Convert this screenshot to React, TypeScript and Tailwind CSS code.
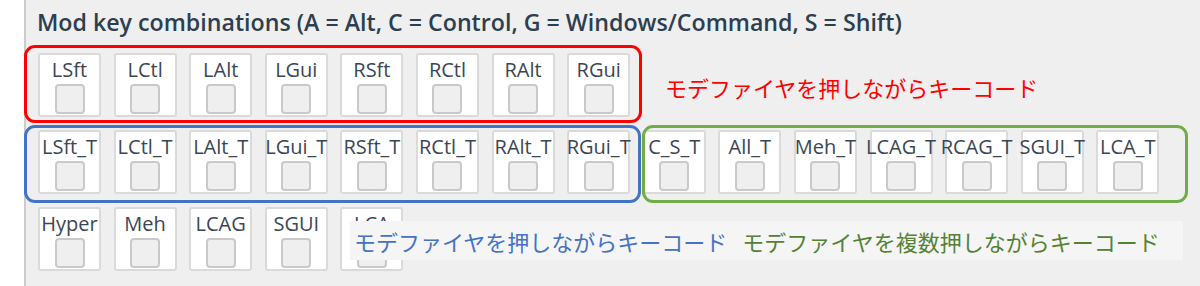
const rowOne = ["LSft", "LCtl", "LAlt", "LGui", "RSft", "RCtl", "RAlt", "RGui"];
const rowTwo = [
  "LSft_T", "LCtl_T", "LAlt_T", "LGui_T", "RSft_T", "RCtl_T", "RAlt_T", "RGui_T",
  "C_S_T", "All_T", "Meh_T", "LCAG_T", "RCAG_T", "SGUI_T", "LCA_T"
];
const rowThree = ["Hyper", "Meh", "LCAG", "SGUI", "LCA"];

function ModKey({ label }: { label: string }) {
  return (
    <div className="w-[63px] h-[64px] shrink-0 bg-white border-2 border-[#dadada] rounded-[3px] flex flex-col items-center">
      <span className="flex justify-center w-full whitespace-nowrap text-[20px] leading-[26px] mt-[2px] text-[#3b4654] overflow-visible">
        {label}
      </span>
      <span className="mt-[1px] w-[30px] h-[30px] rounded-[4px] border-2 border-[#c9c9c9] bg-[#efefef]" />
    </div>
  );
}

function KeyRow({ keys }: { keys: string[] }) {
  return (
    <div className="flex gap-x-[12.6px]">
      {keys.map((k) => (
        <ModKey key={k} label={k} />
      ))}
    </div>
  );
}

export default function App() {
  return (
    <div
      className="relative w-[1200px] h-[286px] flex bg-white overflow-hidden"
      style={{ fontFamily: '"Open Sans", "Noto Sans CJK JP", sans-serif' }}
    >
      <div className="w-[24px] shrink-0 bg-white" />
      <main className="flex-1 border-l-2 border-[#cccccc] bg-[#efefef] pl-[11px] pt-[6px]">
        <h2 className="text-[23.2px] leading-[32px] font-semibold text-[#2c3e50] whitespace-nowrap">
          Mod key combinations (A = Alt, C = Control, G = Windows/Command, S = Shift)
        </h2>
        <div className="mt-[15px] flex flex-col gap-y-[13px] pl-[1px]">
          <KeyRow keys={rowOne} />
          <KeyRow keys={rowTwo} />
          <KeyRow keys={rowThree} />
        </div>
      </main>

      {/* annotation overlays */}
      <div className="absolute left-[24px] top-[45px] w-[618px] h-[78px] border-[3px] border-[#ff0000] rounded-[11px]" />
      <div className="absolute left-[24px] top-[125px] w-[617px] h-[78px] border-[3px] border-[#4472c4] rounded-[11px]" />
      <div className="absolute left-[642px] top-[125px] w-[546px] h-[78px] border-[3px] border-[#70ad47] rounded-[11px]" />
      <div
        className="absolute left-[665px] top-[72px] text-[22px] leading-[30px] text-[#ff0000]"
        style={{ fontFamily: '"Noto Sans CJK JP", sans-serif' }}
      >
        モデファイヤを押しながらキーコード
      </div>
      <div
        className="absolute left-[350px] top-[221px] w-[833px] h-[39px] bg-[#f5f5f5] flex items-center pl-[4px] gap-x-[15px] text-[22px] leading-[30px]"
        style={{ fontFamily: '"Noto Sans CJK JP", sans-serif' }}
      >
        <span className="text-[#4472c4]">モデファイヤを押しながらキーコード</span>
        <span className="text-[#548235]">モデファイヤを複数押しながらキーコード</span>
      </div>
    </div>
  );
}
